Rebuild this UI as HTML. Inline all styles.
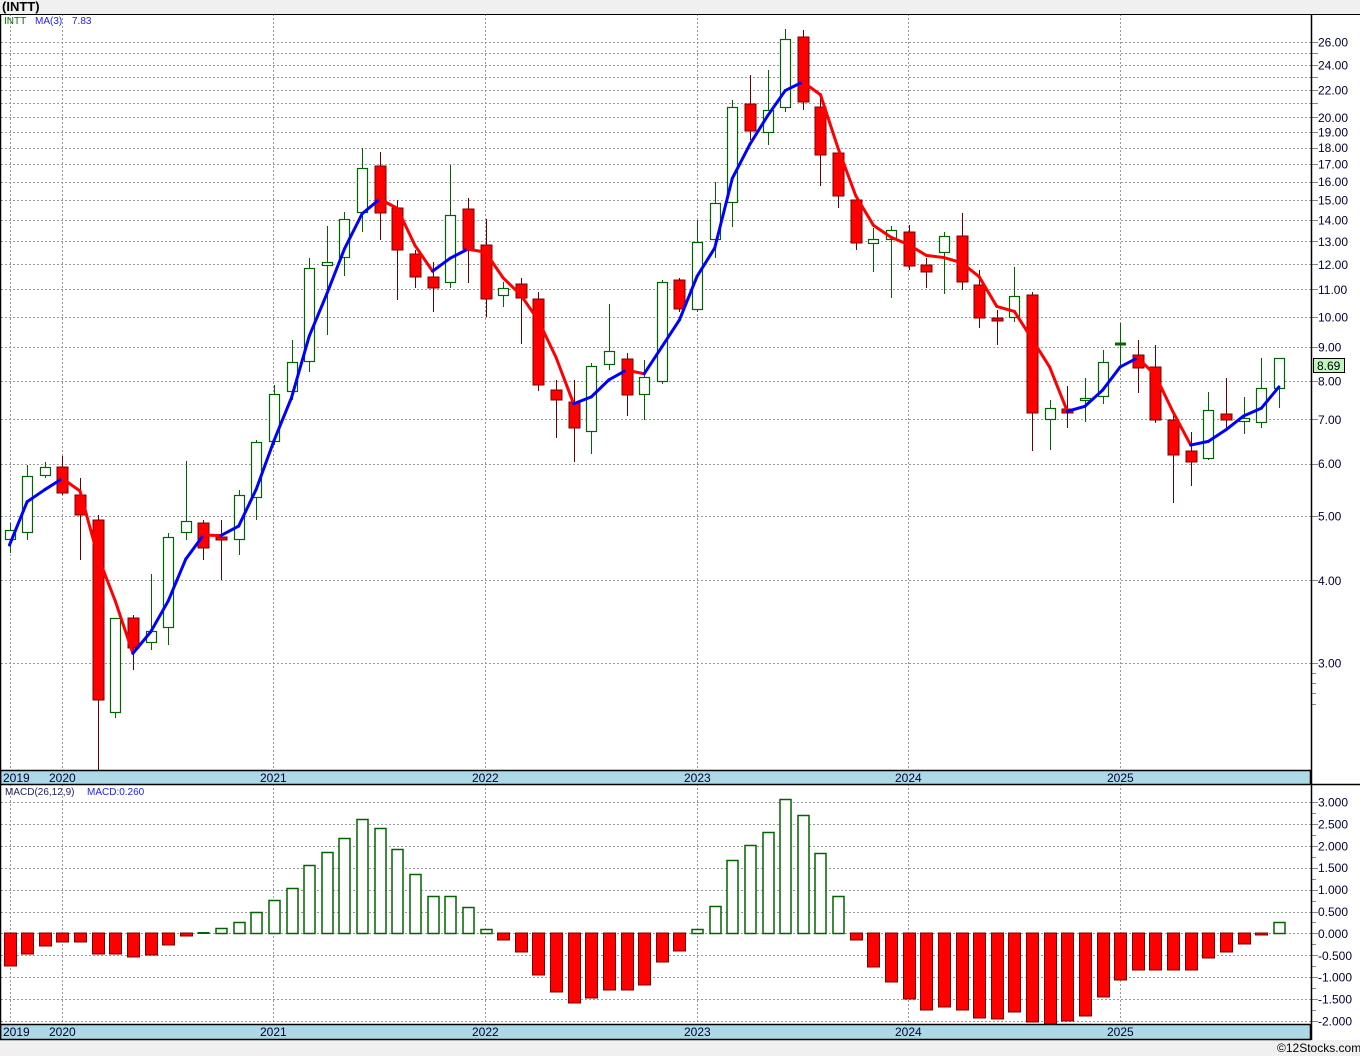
<!DOCTYPE html>
<html><head><meta charset="utf-8">
<style>
html,body{margin:0;padding:0;background:#f0f0f0;}
body{width:1360px;height:1056px;overflow:hidden;font-family:"Liberation Sans",sans-serif;}
svg{display:block}
</style></head><body>
<svg id="c" width="1360" height="1056" xmlns="http://www.w3.org/2000/svg" font-family="Liberation Sans, sans-serif"></svg>
<script>
var s='';
function r(x,y,w,h,f,st,sw){s+='<rect x="'+x+'" y="'+y+'" width="'+w+'" height="'+h+'" fill="'+f+'"'+(st?' stroke="'+st+'" stroke-width="'+(sw||1)+'"':'')+'/>';}
function l(x1,y1,x2,y2,c,w,d){s+='<line x1="'+x1+'" y1="'+y1+'" x2="'+x2+'" y2="'+y2+'" stroke="'+c+'" stroke-width="'+(w||1)+'"'+(d?' stroke-dasharray="'+d+'"':'')+'/>';}
function t(x,y,txt,c,sz,extra){s+='<text x="'+x+'" y="'+y+'" fill="'+c+'" font-size="'+sz+'" '+(extra||'')+'>'+txt+'</text>';}
// backgrounds
r(0,0,1360,14,'#f0f0f0');
r(0,14,1360,1026,'#ffffff');
r(0,1040,1360,16,'#f0f0f0');
t(2,11,'(INTT)','#000',13,'font-weight="bold"');
// price grid
function py(p){return 979-287.6*Math.log(p);}
for(var p=3;p<=26;p++){var y=Math.round(py(p))+0.5;l(1,y,1311,y,'#999',1,'2,2');l(1311,y,1318,y,'#888',1);}
[2.6,2.7,2.8,2.9].forEach(function(p){var y=Math.round(py(p))+0.5;l(1311,y,1316,y,'#888',1);});
var lab=[26,24,22,20,19,18,17,16,15,14,13,12,11,10,9,8,7,6,5,4,3];
lab.forEach(function(p){t(1318,py(p)+4.5,p.toFixed(2),'#000033',12);});
// vertical grid
[10,62,273,485,697,908,1120].forEach(function(x){l(x+0.5,14,x+0.5,770,'#999',1,'2,2');l(x+0.5,784,x+0.5,1024,'#999',1,'2,2');});
// macd grid
for(var k=-4;k<=6;k++){var y=Math.round(933.4-k*21.9)+0.5;l(1,y,1311,y,'#999',1,'2,2');l(1311,y,1318,y,'#888',1);var y2=Math.round(933.4-(k+0.5)*21.9)+0.5;if(k<6&&k>-5)l(1311,y2,1316,y2,'#888',1);}
var ml=['3.000','2.500','2.000','1.500','1.000','0.500','0.000','-0.500','-1.000','-1.500','-2.000'];
ml.forEach(function(v,i){var y=933.4-(3-i*0.5)*43.8;t(1318,y+4.5,v,'#000033',12);});
// candles [open,close,high,low]
var C=[[540,530,523,553],[533,476,465,540],[476,467,462,478],[467,493,456,495],[495,515,478,560],[520,700,515,772],[713,618,618,718],[618,648,615,670],[643,631,574,650],[628,537,533,645],[533,521,461,540],[523,548,520,560],[537,538,520,580],[540,495,490,555],[498,442,440,520],[442,394,385,445],[392,362,340,400],[362,268,258,372],[266,262,226,335],[258,219,212,276],[213,168,148,232],[166,213,152,240],[208,250,200,300],[254,277,250,288],[277,288,262,312],[283,215,165,288],[209,249,198,283],[245,299,219,317],[296,288,282,307],[284,298,278,344],[299,385,292,391],[390,400,380,438],[402,428,380,462],[432,366,363,454],[365,351,304,370],[359,395,353,416],[395,377,360,420],[382,282,280,384],[280,309,278,312],[310,242,220,312],[240,203,182,258],[203,107,100,227],[104,131,75,140],[133,110,70,145],[108,39,29,112],[37,102,30,110],[107,155,95,186],[153,196,148,208],[200,243,196,250],[244,239,228,272],[240,230,226,298],[232,266,225,270],[265,272,258,288],[253,236,232,294],[236,282,213,290],[285,318,270,328],[318,321,310,345],[318,296,267,322],[295,413,292,451],[420,408,400,450],[409,413,386,428],[401,398,378,422],[397,362,350,404],[344.5,343.5,323,365],[355,368,340,393],[367,420,345,423],[420,455,414,503],[451,462,432,486],[459,410,392,460],[414,420,378,428],[422,418,397,434],[423,388,358,428],[389,358,358,408]];
function cx(i){return 9.5+i*17.63;}
C.forEach(function(c,i){var x=Math.round(cx(i));var up=c[1]<=c[0];var top=Math.min(c[0],c[1]),bot=Math.max(c[0],c[1]);
 if(up){l(x+0.5,c[2],x+0.5,top,'#006400',1);l(x+0.5,bot,x+0.5,Math.min(c[3],770),'#006400',1);
  if(bot-top<2){r(x-5,top-1,11,3,'#006400');}else r(x-4.5,top+0.5,10,bot-top-1,'#fff','#006400',1.2);}
 else{l(x+0.5,c[2],x+0.5,Math.min(c[3],770),'#6b0000',1);r(x-5,top,11,Math.max(bot-top,3),'#ff0000','#7a0000',1);}
});
// MA(3)
var cl=C.map(function(c){return Math.exp((979-c[1])/287.6);});
var ma=[];for(var i=0;i<cl.length;i++){var a=cl.slice(Math.max(0,i-2),i+1);var m=a.reduce(function(x,y){return x+y;},0)/a.length;ma.push(979-287.6*Math.log(m));}
ma[0]=545;
for(var i=1;i<ma.length;i++){var col=ma[i]>ma[i-1]?'#ff0000':'#0000ff';s+='<line x1="'+cx(i-1)+'" y1="'+ma[i-1]+'" x2="'+cx(i)+'" y2="'+ma[i]+'" stroke="'+col+'" stroke-width="3" stroke-linecap="round"/>';}
// MACD
var M=[966,954,946,942,942,954,954,957,955,945,936,933.5,928,922,912,900,888,865,852,838,819,828,849,874,896,896,907,929,940,952,975,992,1003,998,990,990,985,962,951,929,906,860,845,832,799,815,853,896,940,967,982,999,1010,1007,1010,1018,1019,1012,1022,1024,1021,1016,997,980,970,970,970,970,958,952,944,935,922];
M.forEach(function(v,i){var x=Math.round(cx(i))-5.5;var z=933;
 if(v<z){r(x+0.5,v+0.5,11,z-v,'#fff','#006400',1.5);}else if(v-z<1.5){r(x,932,12,2,'#006400');}else r(x,z,12,v-z,'#ff0000','#7a0000',1);});
// axis bands
r(0.5,770.5,1310,14,'#add8e6','#000',1.5);
r(0.5,1024.5,1310,15,'#add8e6','#000',1.5);
[['2019',3],['2020',49],['2021',260],['2022',472],['2023',684],['2024',895],['2025',1107]].forEach(function(a){t(a[1],782,a[0],'#000033',12);t(a[1],1036,a[0],'#000033',12);});
// frame
l(0.5,14,0.5,1040,'#000',1.5);
l(0,14.5,1360,14.5,'#000',1);
l(1311.5,14,1311.5,1040,'#000',1.5);
l(1311,784.5,1360,784.5,'#000',1.5);
l(0,1039.5,1311,1039.5,'#000',1);
// legends
t(4,24,'INTT','#007000',10);t(35,24,'MA(3)','#2020ff',10);t(72,24,'7.83','#2020ff',10);
t(5,795,'MACD(26,12,9)','#202060',10);t(87,795,'MACD:0.260','#2020ff',10);
// price label
r(1313.5,358.5,31,14,'#c0f5c0','#000',1);t(1317,370,'8.69','#000',12);
t(1277,1052,'©12Stocks.com','#000',12);
document.getElementById('c').innerHTML=s;
</script>
</body></html>
